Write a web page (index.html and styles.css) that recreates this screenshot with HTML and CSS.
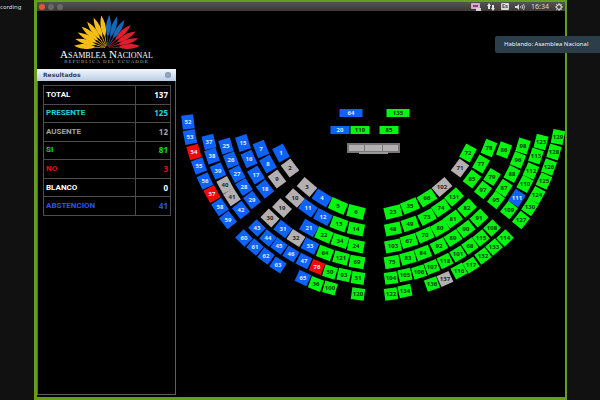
FILE: index.html
```html
<!DOCTYPE html>
<html lang="es">
<head>
<meta charset="utf-8">
<title>Asamblea Nacional - Resultados</title>
<link rel="stylesheet" href="styles.css">
</head>
<body>
<div class="stage">
  <aside class="gutter">cording</aside>
  <main class="window">
    <header class="menubar">
      <div class="controls">
        <button class="dot close" aria-label="Cerrar"></button>
        <button class="dot" aria-label="Minimizar"></button>
        <button class="dot" aria-label="Maximizar"></button>
      </div>
      <div class="tray">
        <svg width="10" height="8" viewBox="0 0 10 8"><rect x="0" y="0" width="9" height="6" rx="1" fill="#d9a5cf"/><rect x="2" y="2" width="5" height="2" fill="#7d4b80"/><path d="M5 5h5v3h-5z" fill="#d8cfd6"/></svg>
        <svg width="8" height="8" viewBox="0 0 8 8" fill="#e4e2de"><path d="M2 0l2 3H3v3H1V3H0zM6 8L4 5h1V2h2v3h1z"/></svg>
        <span class="lang">Es</span>
        <svg width="10" height="8" viewBox="0 0 10 8" fill="none" stroke="#dddbd6"><path d="M0 3h2l2-2v6l-2-2H0z" fill="#dddbd6" stroke="none"/><path d="M5.500 3q1 1 0 2M7 2q1.500 2 0 4M8.500 1q2 3 0 6" stroke-width=".8"/></svg>
        <time>16:34</time>
        <svg width="8" height="8" viewBox="0 0 8 8" fill="none" stroke="#d5d3ce"><circle cx="4" cy="4" r="2.300" stroke-width="1.200"/><path d="M4 0v1.500M4 6.500V8M0 4h1.500M6.500 4H8M1.200 1.200l1 1M5.800 5.800l1 1M6.800 1.200l-1 1M2.200 5.800l-1 1"/></svg>
      </div>
    </header>
    <div class="content">
      <section class="side">
        <div class="brand">
          <svg class="feathers" viewBox="0 0 66 34" aria-hidden="true">
            <defs><path id="f" d="M-.2 -2L-.4 -12C-3.200 -18 -3.200 -25 0 -33C3.200 -25 3.200 -18 .4 -12L.2 -2Z"/></defs>
            <g transform="translate(33 33)">
              <g fill="#f6bd19"><use href="#f" transform="rotate(-86)"/><use href="#f" transform="rotate(-74)"/><use href="#f" transform="rotate(-62)"/><use href="#f" transform="rotate(-50)"/><use href="#f" transform="rotate(-37)"/><use href="#f" transform="rotate(-24)"/><use href="#f" transform="rotate(-10)"/></g>
              <g fill="#1767b5"><use href="#f" transform="rotate(4)"/><use href="#f" transform="rotate(18)"/><use href="#f" transform="rotate(32)"/></g>
              <g fill="#dc1f2c"><use href="#f" transform="rotate(46)"/><use href="#f" transform="rotate(60)"/><use href="#f" transform="rotate(73)"/><use href="#f" transform="rotate(86)"/></g>
            </g>
          </svg>
          <h1>Asamblea Nacional</h1>
          <p>REPÚBLICA DEL ECUADOR</p>
        </div>
        <section class="panel">
          <div class="panel-head"><h2>Resultados</h2><button aria-label="Contraer"></button></div>
          <table>
            <tr class="white"><th scope="row">TOTAL</th><td>137</td></tr>
            <tr class="cyan"><th scope="row">PRESENTE</th><td>125</td></tr>
            <tr class="gray"><th scope="row">AUSENTE</th><td>12</td></tr>
            <tr class="green"><th scope="row">SI</th><td>81</td></tr>
            <tr class="red"><th scope="row">NO</th><td>3</td></tr>
            <tr class="white"><th scope="row">BLANCO</th><td>0</td></tr>
            <tr class="blue"><th scope="row">ABSTENCION</th><td>41</td></tr>
          </table>
        </section>
      </section>
      <svg class="seats" id="seats" viewBox="176 11 389 386" role="img" aria-label="Hemiciclo"></svg>
    </div>
  </main>
  <div class="gutter"></div>
  <div class="toast" role="status">Hablando: Asamblea Nacional</div>
</div>
<script src="seats.js"></script>
</body>
</html>
```
FILE: styles.css
```css
* { box-sizing: border-box; }
body { margin: 0; background: #111; color: #fff; font-family: "Noto Sans", "Liberation Sans", sans-serif; }
button { padding: 0; border: 0; }
.stage { position: relative; display: grid; grid-template-columns: 34px 1fr 33px; min-height: 100vh; }
.gutter { background: #111; color: #ddd; font-size: 6px; line-height: 8px; padding-top: 3px; }
.window { display: flex; flex-direction: column; background: #000; border: solid #689c20; border-width: 2px 2px 3px 3px; }
.menubar { display: flex; justify-content: space-between; align-items: center; height: 9px; padding: 0 2px; background: linear-gradient(#55534f, #3b3a37); }
.controls { display: flex; gap: 3px; }
.dot { width: 6px; height: 6px; border-radius: 50%; background: #6b6963; }
.close { background: #e2553a; }
.tray { display: flex; align-items: center; gap: 6px; color: #d8d6d1; font-size: 7px; line-height: 8px; }
.tray svg { display: block; }
.lang { padding: 0 1px; border-radius: 1px; background: #dcdad5; color: #55534f; font-size: 6px; font-weight: 700; line-height: 7px; }
.content { flex: 1; display: flex; }
.side { flex: 0 0 139px; display: flex; flex-direction: column; padding-bottom: 2px; }
.brand { height: 58px; padding-top: 4px; text-align: center; font-family: "Liberation Serif", serif; white-space: nowrap; }
.feathers { display: block; width: 66px; height: 34px; margin: 0 auto; }
.brand h1 { margin: 1px 0 0; font-size: 11px; line-height: 9px; font-weight: 400; font-variant: small-caps; }
.brand p { margin: 0; font-size: 5px; line-height: 5px; letter-spacing: 1px; color: #aaa; }
.panel { flex: 1; border: 1px solid #5c5f66; border-top: 0; }
.panel-head { display: flex; justify-content: space-between; align-items: center; height: 12px; margin: 0 -1px; padding: 0 5px 0 6px; background: linear-gradient(#f3f8fd, #b9cde4); color: #2e4560; }
.panel-head h2 { margin: 0; font: 700 6px/12px "DejaVu Sans", sans-serif; }
.panel-head button { width: 6px; height: 6px; border-radius: 2px; background: #8fa5bd; }
table { width: calc(100% - 9px); height: 131px; margin: 4px 4px 0 5px; border-collapse: collapse; font: 500 8px/12px Roboto, sans-serif; }
th, td { padding: 0 2px; border: 1px solid #4c4c4c; text-align: left; }
th { font-weight: 700; }
td { width: 35px; text-align: right; font: 700 8px/12px "Noto Sans", sans-serif; }
.white { color: #fff; } .cyan { color: #22d3d0; } .gray { color: #a3a3a3; }
.green { color: #0be00b; } .red { color: #f00808; } .blue { color: #2a57e0; }
.seats { flex: 1; min-width: 0; display: block; align-self: flex-start; }
.seats text { font: 700 6px "Noto Sans", sans-serif; text-anchor: middle; fill: #073807; }
.seats .si { fill: #05f510; }
.seats .ab { fill: #0f62f8; }
.seats .no { fill: #f40808; }
.seats .au { fill: #b4b0b2; }
.seats text.light { fill: #dce9ff; }
.seats text.dark { fill: #252525; }
.toast { position: absolute; top: 36px; right: 0; width: 105px; padding: 0 9px; border-radius: 2px 0 0 2px; background: #2d3e4b; color: #eef2f5; font-size: 6px; line-height: 17px; white-space: nowrap; }
```
FILE: seats.js
```js
// Each row: seat length along the arc, then [number, x, y, vote]; default vote is "si".
const upper = [
  [14, [52,188,122,"ab"],[53,190,137,"ab"],[54,194,152,"no"],[55,199,166,"ab"],[56,205,181,"ab"],[57,212,194,"no"],[58,220,207,"ab"],[59,228,220,"ab"]],
  [14, [37,209,142,"ab"],[38,212,156,"ab"],[39,218,171,"ab"],[40,225,185,"au"],[41,232,197,"au"],[42,241,210,"ab"]],
  [14, [25,226,146,"ab"],[26,231,160,"ab"],[27,237,174,"ab"],[28,244,187,"ab"],[29,252,200,"ab"]],
  [15, [15,243,143,"ab"],[16,249,159,"ab"],[17,256,175,"ab"],[18,265,189,"ab"]],
  [15, [7,261,149,"ab"],[8,268,164,"ab"],[9,277,179,"au"]],
  [15, [1,281,153,"ab"],[2,290,168,"au"]],
  [15, [72,468,153],[71,460,168,"au"]],
  [15, [78,489,148],[77,481,164],[85,472,179]],
  [14, [86,504,150],[79,492,177],[97,483,190]],
  [14, [98,523,146],[96,518,160],[88,512,174],[87,504,188],[95,496,200]],
  [14, [123,541,142],[113,536,156],[112,531,171],[110,525,184],[111,517,198,"ab"],[109,509,210]],
  [14, [129,558,137],[128,554,152],[126,549,167],[125,544,181],[124,537,195],[130,530,207],[127,521,220]]
];
const lower = [
  [17, [3,307,187,"au"],[4,322,198,"ab"],[5,338,206],[6,356,212],[23,393,212],[35,410,206],[66,427,198],[102,442,187,"au"]],
  [16, [10,295,198,"au"],[11,308,208,"ab"],[12,323,217,"ab"],[13,339,224],[14,356,229],[48,393,229],[49,410,224],[73,427,217],[74,441,208],[131,454,197]],
  [16, [19,282,208,"au"],[21,309,228,"ab"],[22,324,235],[34,340,241],[24,356,246],[103,393,246],[67,409,241],[70,425,235],[80,440,228],[81,453,219],[82,467,208]],
  [15, [30,270,218,"au"],[31,283,229,"ab"],[32,296,238,"au"],[33,310,246,"ab"],[64,325,253],[121,341,258],[69,357,262],[75,392,262],[83,408,258],[84,423,253],[92,439,246],[89,453,238],[90,466,229],[91,479,218]],
  [13, [43,257,228,"ab"],[44,268,238,"ab"],[45,279,246,"ab"],[46,291,254,"ab"],[47,304,261,"ab"],[76,317,267,"no"],[50,330,272],[93,344,275],[51,358,278],[104,391,278],[105,405,275],[106,419,272],[107,432,267],[118,445,261],[101,458,254],[68,470,246],[115,481,238],[108,492,228]],
  [13, [60,244,238,"ab"],[61,255,247,"ab"],[62,266,256,"ab"],[63,278,265,"ab"],[65,303,278,"ab"],[36,316,284],[100,330,288],[120,358,294],[122,391,294],[134,405,291],[136,432,284],[137,445,279,"au"],[116,459,271],[117,471,265],[132,483,256],[133,494,247],[114,505,238]]
];
const desk = [[64,351,113,"ab",23],[135,398,113,"si",23],[20,340,130,"ab",19],[119,360,130,"si",19],[85,389,130,"si",19]];

const svg = document.getElementById("seats");
function el(name, attrs, text) {
  const n = document.createElementNS("http://www.w3.org/2000/svg", name);
  for (const k in attrs) n.setAttribute(k, attrs[k]);
  if (text !== undefined) n.textContent = text;
  svg.appendChild(n);
}
function seat(label, x, y, vote, w, h, angle) {
  el("rect", { x: x - w / 2, y: y - h / 2, width: w, height: h, class: vote, transform: `rotate(${angle} ${x} ${y})` });
  el("text", { x, y: y + 2, class: vote === "si" ? "" : vote === "au" ? "dark" : "light" }, label);
}
function slope(x, y) {
  const cx = x < 375 ? 385 : 365;
  return Math.atan2(y - 98, x - cx) * 180 / Math.PI;
}
for (const [len, ...row] of upper)
  for (const [n, x, y, vote = "si"] of row) seat(n, x, y, vote, 12, len, slope(x, y) - (x < 375 ? 180 : 0));
for (const [len, ...row] of lower)
  for (const [n, x, y, vote = "si"] of row) seat(n, x, y, vote, len, 12, slope(x, y) - 90);
for (const [n, x, y, vote, w] of desk) seat(n, x, y, vote, w, 8, 0);

el("rect", { x: 347, y: 143, width: 53, height: 10, fill: "#777" });
for (const x of [349, 365, 383]) el("rect", { x, y: 145, width: x === 365 ? 17 : 15, height: 6, fill: "#b4b0b2" });
el("rect", { x: 359, y: 152, width: 29, height: 2, fill: "#999" });
```
